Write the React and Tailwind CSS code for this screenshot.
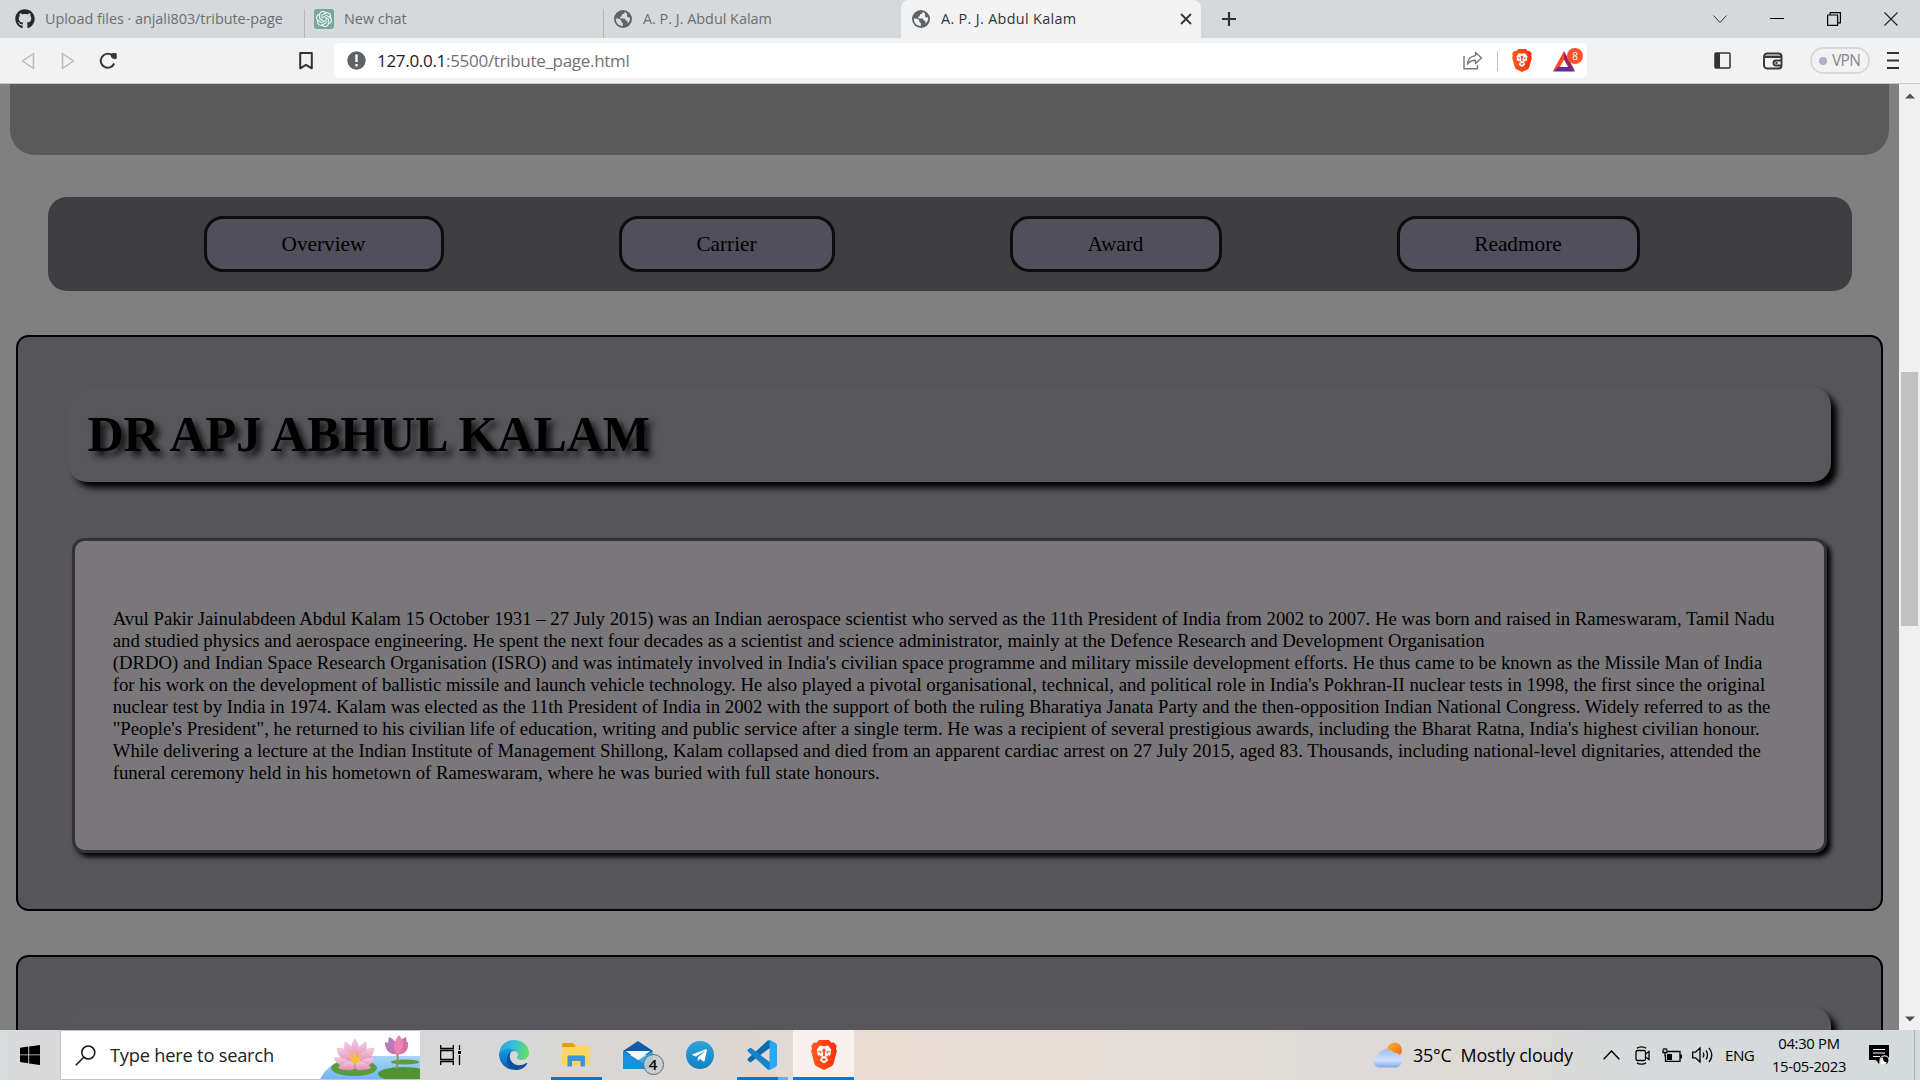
import React from "react";
import { FaGithub, FaTelegramPlane } from "react-icons/fa";
import { SiOpenai } from "react-icons/si";

const UI = "font-['Open_Sans','Noto_Sans',sans-serif]";

function Globe({ land = "#d5d9dc" }) {
  return (
    <svg width="20" height="20" viewBox="0 0 20 20" className="shrink-0">
      <circle cx="10" cy="10" r="9" fill="#5f6368" />
      <path d="M11.500 2.800c.3 1.500-.4 2.200-1.600 2.300-1 .2-1.200 1-1.100 1.900-.5.6-1.600.6-1.800 1.400 0 .7.500 1 1.300 1h3c.9.200 1 1 1.100 1.800.8.300 1.700.3 2.100 1.300.3.900 0 1.700-.7 2.500 2.600-1.600 3.600-4.200 3.200-6.800-1.400.7-2.500.3-2.900-.8-.4-1.200.3-2.200-.2-3-.5-.7-1.500-1.200-2.400-1.600z" fill={land} />
      <path d="M2.800 9.600c1.900 0 4.200.4 5.200 1.600.6 1 0 2.100 1.300 2.500.9.400.8 1.800.2 3.500C5.700 16.900 2.700 13.700 2.800 9.600z" fill={land} />
    </svg>
  );
}

function BraveLion({ width, height }) {
  return (
    <svg width={width} height={height} viewBox="0 0 26 30" className="shrink-0">
      <defs>
        <linearGradient id="lion" x1="0" y1="0" x2="1" y2="0"><stop offset="0" stopColor="#ff5a1c" /><stop offset="1" stopColor="#ff2f0c" /></linearGradient>
      </defs>
      <path d="M8 0h10l2.500 2.700 2.700-.2L25.800 6l-.9 2.700 1 2.300-3.300 12.500c-.4 1.300-1 2-2 2.800L13 30l-7.600-3.700c-1-.8-1.600-1.500-2-2.800L.1 11l1-2.300L.2 6l2.600-3.500 2.700.2z" fill="url(#lion)" />
      <path d="M9 5.500l4 .8 4-.8 3.300 4.300-.8 2.400 .4 2-3.700 3.600 .8 2.600L13 23.500l-4-3.100.8-2.600-3.700-3.600.4-2-.8-2.400z" fill="#fff" />
      <path d="M13 8l1.900 2.500-1.200 2.200.3 3.300h-2l.3-3.300-1.200-2.200zM6.500 10.800l4.500 1-.9 1.700zM19.500 10.800l-4.500 1 .9 1.700zM7.500 14.500l4 2.600-2 .9zM18.500 14.500l-4 2.600 2 .9zM13 18.200l2.500 1.200L13 21l-2.500-1.600z" fill="#ff4a1a" />
    </svg>
  );
}

function Tabs() {
  return (
    <div className={`${UI} flex h-[38px] bg-[#d5d9dc] text-[14.400px] text-[#6b6e72]`}>
      <div className="flex w-[304px] items-center pl-[15px]">
        <FaGithub size={20} color="#24292e" />
        <span className="ml-[10px] whitespace-nowrap tracking-[-0.03px]">Upload files · anjali803/tribute-page</span>
      </div>
      <div className="mt-[9px] w-px bg-[#b4b8bb]" />
      <div className="flex w-[298px] items-center pl-[9px]">
        <div className="flex size-5 items-center justify-center rounded-[3px] bg-[#75a99b]">
          <SiOpenai size={16} color="#fff" />
        </div>
        <span className="ml-[10px]">New chat</span>
      </div>
      <div className="mt-[9px] w-px bg-[#b4b8bb]" />
      <div className="flex w-[297px] items-center pl-[9px]">
        <Globe />
        <span className="ml-[10px]">A. P. J. Abdul Kalam</span>
      </div>
      <div className="flex w-[300px] items-center rounded-t-[8px] bg-[#f2f2f2] pl-[10px] pr-[9px] text-[#303236]">
        <Globe land="#f2f2f2" />
        <span className="ml-[10px] font-medium tracking-[0.330px]">A. P. J. Abdul Kalam</span>
        <svg className="ml-auto" width="12" height="12" viewBox="0 0 12 12" stroke="#303236" strokeWidth="1.800"><path d="M1 1l10 10M11 1L1 11" /></svg>
      </div>
      <svg className="ml-5 self-center" width="16" height="16" viewBox="0 0 16 16" stroke="#303236" strokeWidth="2.200"><path d="M8 1v14M1 8h14" /></svg>
      <div className="ml-auto flex items-center gap-[43px] pr-[22px]">
        <svg width="14" height="10" viewBox="0 0 14 10" fill="none" stroke="#333"><path d="M.5 1.500L7 8.500l6.500-7" /></svg>
        <svg width="14" height="14" viewBox="0 0 14 14"><path d="M0 6h14v1H0z" /></svg>
        <svg width="14" height="14" viewBox="0 0 14 14" fill="none" stroke="#000" strokeWidth="1.200"><path d="M.6 3h10v10.400H.6zM3.200 3V.6h10.200v10.200h-2.800" /></svg>
        <svg width="14" height="14" viewBox="0 0 14 14" stroke="#222" strokeWidth="1.100"><path d="M.5.5l13 13M13.500.5l-13 13" /></svg>
      </div>
    </div>
  );
}

function Toolbar() {
  return (
    <div className={`${UI} flex h-[46px] items-center border-b border-[#c9c9c9] bg-[#f2f2f2]`}>
      <svg className="ml-[21px]" width="14" height="18" viewBox="0 0 14 18" fill="none" stroke="#b7b9bb" strokeWidth="1.500" strokeLinejoin="round"><path d="M12.500 1.500v15L1.500 9z" /></svg>
      <svg className="ml-[26px]" width="14" height="18" viewBox="0 0 14 18" fill="none" stroke="#b7b9bb" strokeWidth="1.500" strokeLinejoin="round"><path d="M1.500 1.500v15L12.500 9z" /></svg>
      <svg className="ml-[24px]" width="19" height="18" viewBox="0 0 19 18" fill="none" stroke="#34373b" strokeWidth="2"><path d="M15.200 11.500A7 7 0 1 1 13 3.200" /><path d="M12.500 1.800l4.700-.2v4.900c-2.200.4-4-.2-4.700-1.600z" fill="#34373b" strokeWidth="1" strokeLinejoin="round" /></svg>
      <svg className="ml-[181px]" width="14" height="18" viewBox="0 0 14 18" fill="none" stroke="#303236" strokeWidth="2" strokeLinejoin="round"><path d="M1.200 1h11.600v15.300L7 12.800l-5.800 3.500z" /></svg>
      <div className="ml-[21px] flex h-[35px] w-[1253px] items-center rounded-[6px] bg-white pl-[13px] text-[17px]">
        <svg width="19" height="19" viewBox="0 0 19 19"><circle cx="9.500" cy="9.500" r="9.200" fill="#5f6368" /><path d="M8.300 3.500h2.400v7.500H8.300zM8.300 13h2.400v2.400H8.300z" fill="#fff" /></svg>
        <span className="ml-[11px] tracking-[-0.300px] text-[#6f7276]"><span className="text-[#222]">127.0.0.1</span>:5500/tribute_page.html</span>
        <svg className="ml-auto" width="20" height="19" viewBox="0 0 20 19" fill="none" stroke="#777" strokeWidth="1.400"><path d="M1 5v12.800h13.500V14" /><path d="M12.500 1.500L18.500 7l-6 5.500V9.200c-3.500 0-6 1-8 4 .3-4.500 3-8 8-8.600z" strokeLinejoin="round" /></svg>
        <span className="ml-[14px] mr-[14px] h-5 w-px bg-[#c5c5c5]" />
        <BraveLion width={20} height={23} />
        <div className="relative ml-[21px] mr-[12px] h-[26px] w-[22px]">
          <svg className="mt-[3px]" width="22" height="21" viewBox="0 0 22 21"><path d="M11 0L0 20l6-2.500 5-9z" fill="#ff4724" /><path d="M11 0l11 20-6-2.500-5-9z" fill="#9e1f63" /><path d="M0 20.500h22l-5.500-4.500H5.500z" fill="#662d91" /></svg>
          <span className="absolute left-[14px] top-0 flex size-4 items-center justify-center rounded-full bg-[#fb542b] text-[10px] leading-none text-white">8</span>
        </div>
      </div>
      <svg className="ml-[127px]" width="17" height="17" viewBox="0 0 17 17"><rect x="1" y="1" width="15" height="15" rx="1" fill="none" stroke="#303236" strokeWidth="1.500" /><path d="M1 1h5v15H1z" fill="#303236" /></svg>
      <svg className="ml-[32px]" width="20" height="18" viewBox="0 0 20 18" fill="none" stroke="#34373b" strokeWidth="1.900"><rect x="1" y="1.500" width="17.500" height="15" rx="3" /><path d="M2 4.800h16.500" strokeWidth="2.400" /><path d="M19 8.500h-6a2.500 2.500 0 0 0 0 5h6" /><path d="M12.500 11h2" /></svg>
      <div className="ml-[27px] flex h-[27px] w-[60px] items-center rounded-full border-2 border-[#d6d8da] pl-[7px] text-[15.500px] tracking-[-0.700px] text-[#85888c]">
        <span className="mr-[5px] size-2 rounded-full bg-[#aeb0c8]" />VPN
      </div>
      <svg className="ml-[17px]" width="12" height="17" viewBox="0 0 12 17" stroke="#303236" strokeWidth="1.800"><path d="M0 1h12M0 8.500h12M0 16h12" /></svg>
    </div>
  );
}

function NavButton({ className, children }) {
  return (
    <div className={`flex h-[56px] items-center justify-center rounded-[19px] border-[3px] border-[#0d0d0d] bg-[#504f5b] pr-px pt-[2px] text-[21.250px] text-black ${className}`}>{children}</div>
  );
}

const LINES = [
  "Avul Pakir Jainulabdeen Abdul Kalam 15 October 1931 – 27 July 2015) was an Indian aerospace scientist who served as the 11th President of India from 2002 to 2007. He was born and raised in Rameswaram, Tamil Nadu",
  "and studied physics and aerospace engineering. He spent the next four decades as a scientist and science administrator, mainly at the Defence Research and Development Organisation",
  "(DRDO) and Indian Space Research Organisation (ISRO) and was intimately involved in India's civilian space programme and military missile development efforts. He thus came to be known as the Missile Man of India",
  "for his work on the development of ballistic missile and launch vehicle technology. He also played a pivotal organisational, technical, and political role in India's Pokhran-II nuclear tests in 1998, the first since the original",
  "nuclear test by India in 1974. Kalam was elected as the 11th President of India in 2002 with the support of both the ruling Bharatiya Janata Party and the then-opposition Indian National Congress. Widely referred to as the",
  "\"People's President\", he returned to his civilian life of education, writing and public service after a single term. He was a recipient of several prestigious awards, including the Bharat Ratna, India's highest civilian honour.",
  "While delivering a lecture at the Indian Institute of Management Shillong, Kalam collapsed and died from an apparent cardiac arrest on 27 July 2015, aged 83. Thousands, including national-level dignitaries, attended the",
  "funeral ceremony held in his hometown of Rameswaram, where he was buried with full state honours.",
];

function Page() {
  return (
    <div className="flex h-[946px] overflow-hidden">
      <div className="h-full w-[1899px] overflow-hidden bg-[#808080] font-['Liberation_Serif',serif] text-black">
        <div className="mx-[10px] h-[71px] rounded-b-[25px] bg-[#5a5a5a]" />
        <div className="ml-[48px] mt-[42px] flex h-[94px] w-[1804px] items-center rounded-[19px] bg-[#3f3e40] pl-[156px]">
          <NavButton className="w-[240px]">Overview</NavButton>
          <NavButton className="ml-[175px] w-[216px]">Carrier</NavButton>
          <NavButton className="ml-[175px] w-[212px]">Award</NavButton>
          <NavButton className="ml-[175px] w-[243px]">Readmore</NavButton>
        </div>
        <section className="ml-[16px] mt-[44px] h-[576px] w-[1867px] rounded-[12.500px] border-2 border-black bg-[#565559] pl-[50px] pt-[50px]">
          <h1 className="flex h-[95px] w-[1763px] items-center rounded-[19px] bg-[#57565a] pl-[19.500px] text-[50px] font-bold [box-shadow:6px_6px_6px_#000] [text-shadow:5px_5px_6px_rgba(0,0,0,0.8)]">DR APJ ABHUL KALAM</h1>
          <div className="ml-[4px] mt-[56px] h-[315px] w-[1755px] rounded-[12.500px] border-[3px] border-[#343235] bg-[#7a777a] pl-[37.700px] pt-[67px] text-[18.750px] leading-[22px] [box-shadow:4px_4px_5px_#000]">
            {LINES.map((l) => <p key={l} className="whitespace-nowrap">{l}</p>)}
          </div>
        </section>
        <section className="ml-[16px] mt-[44px] h-[576px] w-[1867px] rounded-[12.500px] border-2 border-black bg-[#565559] pl-[50px] pt-[50px]">
          <div className="h-[95px] w-[1763px] rounded-[19px] bg-[#57565a] [box-shadow:6px_6px_6px_#000]" />
        </section>
      </div>
      <div className="flex w-[21px] flex-col items-center bg-[#f0f0f0]">
        <svg className="mt-[9px]" width="10" height="6" viewBox="0 0 10 6"><path d="M0 5.500h10L5 .5z" fill="#505050" /></svg>
        <div className="mt-[273px] h-[254px] w-[17px] bg-[#c1c1c1]" />
        <svg className="mb-[8px] mt-auto" width="10" height="6" viewBox="0 0 10 6"><path d="M0 .5h10L5 5.500z" fill="#505050" /></svg>
      </div>
    </div>
  );
}

function Lotus() {
  return (
    <svg width="100" height="50" viewBox="0 0 100 50">
      <defs>
        <linearGradient id="water" x1="0" y1="0" x2="0" y2="1"><stop offset="0" stopColor="#a9d3fb" /><stop offset="1" stopColor="#6cb6f7" /></linearGradient>
        <linearGradient id="petal" x1="0" y1="0" x2="0" y2="1"><stop offset="0" stopColor="#f0cfe4" /><stop offset="1" stopColor="#e887b4" /></linearGradient>
        <linearGradient id="bud" x1="0" y1="0" x2="1" y2="1"><stop offset="0" stopColor="#a37fc0" /><stop offset="1" stopColor="#e96a9e" /></linearGradient>
      </defs>
      <path d="M0 50C5 36 22 26 50 26h50v24z" fill="url(#water)" />
      <ellipse cx="34" cy="38" rx="23" ry="8" fill="#5b9c36" />
      <ellipse cx="83" cy="44" rx="25" ry="7" fill="#4f9431" />
      <ellipse cx="85" cy="32" rx="14" ry="2.500" fill="#5b9c36" />
      <path d="M77 39c0-6 2-10 0-16" stroke="#7d9a5c" strokeWidth="2" fill="none" />
      <g fill="url(#petal)" stroke="#dc8fbb" strokeWidth=".3">
        <path d="M35 9c5 6 5 14 0 21-5-7-5-15 0-21z" />
        <path d="M25 12c7 3 11 10 11 18-9-2-13-9-11-18zM46 12c-7 3-11 10-11 18 9-2 13-9 11-18z" />
        <path d="M17 18c10 0 16 6 18 15-10 1-17-5-18-15zM54 18c-10 0-16 6-18 15 10 1 17-5 18-15z" />
        <path d="M14 28c8-1 16 1 21 8-8 3-17 1-21-8zM55 28c-8-1-15 1-20 8 8 3 16 1 20-8z" />
        <path d="M18 38c4-6 10-8 17-6-1 7-9 10-17 6zM51 38c-4-6-10-8-17-6 1 7 9 10 17 6zM27 40c1-5 4-8 8-8 3 5-1 9-8 8zM43 40c-1-5-4-8-8-8-3 5 1 9 8 8z" />
      </g>
      <path d="M29 22l4 6 1-8 3 8 4-6-1 9c-3 3-7 3-9 0z" fill="#f7c331" />
      <g fill="url(#bud)"><path d="M65 12c7 1 11 5 12 12-8 1-12-4-12-12zM88 12c-7 1-10 5-11 12 8 1 12-4 11-12z" /><path d="M69 7c7 3 10 9 8 18-8-4-10-10-8-18zM86 7c-7 3-10 9-8 18 8-4 10-10 8-18z" /><path d="M79 5c6 7 5 14-1 20-6-6-5-13 1-20z" fill="#ec83b5" /></g>
    </svg>
  );
}

function Edge() {
  return (
    <svg width="30" height="30" viewBox="0 0 30 30">
      <defs>
        <linearGradient id="e1" x1="0" y1=".3" x2="1" y2=".4"><stop offset="0" stopColor="#2aa5dc" /><stop offset=".5" stopColor="#35c1d8" /><stop offset="1" stopColor="#66e05d" /></linearGradient>
        <linearGradient id="e2" x1="0" y1="0" x2="0" y2="1"><stop offset="0" stopColor="#1b9de2" /><stop offset="1" stopColor="#0a5bb0" /></linearGradient>
      </defs>
      <path d="M0 14C1 5 7 0 15 0c9 0 15 6 15 13 0 4-3 7-7 7-3 0-5-1-5-2.500 0-1 1-1.500 1-3 0-3-3-5.500-7-5.500C6 9 1 12 0 14z" fill="url(#e1)" />
      <path d="M0 14c2-4 6-5.500 10-5.500 5 0 9 3 9 6 0-2-2-3.500-4-3.500-3 0-6 4-6 8 0 5 4 10 9 10.500C8 31 0 24 0 14z" fill="url(#e2)" />
      <path d="M12 12c-3 5 0 12 6 13 4 .7 7-.5 9.500-2 .6-.3 1 .1.700.7C26 27.500 22 30 17 30c-6-1-9-6-9-11 0-3 1.500-5.500 4-7z" fill="#0d4f9c" />
    </svg>
  );
}

function Explorer() {
  return (
    <svg width="28" height="24" viewBox="0 0 28 24">
      <path d="M0 1.500C0 .7.500 0 1.500 0h9.500l2.500 2.500V6H0z" fill="#e0a011" />
      <path d="M0 4h12l2-1.500h12.500c.8 0 1.200.5 1.200 1.200V21c0 1-.5 1.500-1.500 1.500H1.500C.5 22.500 0 22 0 21z" fill="#ffd460" />
      <path d="M5.500 23.500V14c0-1 .6-1.600 1.600-1.600h14.300c1 0 1.600.6 1.600 1.600v9.500h-4.500V18h-8.500v5.500z" fill="#3f95d8" />
    </svg>
  );
}

function Mail() {
  return (
    <div className="relative h-[34px] w-[41px]">
      <svg width="31" height="29" viewBox="0 0 31 29">
        <path d="M0 10L15 0l15 10-4 4H4z" fill="#0f5cab" />
        <path d="M2.500 10h25l-12.500 9z" fill="#f4f4f4" />
        <path d="M0 10l15 9.500L30 10v18H0z" fill="#2cb0ec" />
        <path d="M0 10v18h30z" fill="#1a8fdc" />
      </svg>
      <span className="absolute left-[20px] top-[13px] flex size-[21px] items-center justify-center rounded-full border border-[#666] bg-[#c8ced2]/85 text-[15px] font-semibold leading-none">4</span>
    </div>
  );
}

function VSCode() {
  return (
    <svg width="30" height="30" viewBox="0 0 100 100">
      <path d="M96 12L76 1c-3-1-5 0-7 1L3 62c-2 2-2 4 0 6l6 5c2 1 4 1 5 0L94 13z" fill="#0b6cb0" />
      <path d="M96 88L76 99c-3 1-5 0-7-1L3 38c-2-2-2-4 0-6l6-5c2-1 4-1 5 0l80 60z" fill="#1384cc" />
      <path d="M76 99c-3 1-5 0-7-1 2 2 6 1 6-3V5c0-4-4-5-6-3 2-2 4-2 7-1l20 10c2 1 4 3 4 6v66c0 3-2 5-4 6z" fill="#2aa8f2" />
    </svg>
  );
}

function Taskbar() {
  return (
    <div className={`${UI} flex h-[50px] bg-[linear-gradient(90deg,#d9dadb_0%,#d8d7d6_30%,#dcd7d3_38%,#eaddd4_45%,#e8dfd8_55%,#dddad7_70%,#dedad6_76%,#d6dadb_86%,#d5dadc_100%)] text-black`}>
      <div className="flex w-[60px] items-center pl-5">
        <svg width="20" height="20" viewBox="0 0 20 20"><path d="M0 2.800L8.300 1.600v7.800H0zM9.200 1.500L20 0v9.400H9.200zM0 10.300h8.300v7.900L0 17zM9.200 10.300H20V20L9.200 18.400z" /></svg>
      </div>
      <div className="flex h-[50px] w-[360px] items-center overflow-hidden border border-r-0 border-[#c4c4c4] bg-white pl-[14px]">
        <svg width="21" height="21" viewBox="0 0 21 21" fill="none" stroke="#111" strokeWidth="1.500"><circle cx="13.300" cy="7.500" r="6.500" /><path d="M8.700 12.200L.8 20.300" /></svg>
        <span className="ml-[14px] whitespace-nowrap text-[18.300px] tracking-[-0.230px] text-[#222]">Type here to search</span>
        <div className="ml-auto shrink-0"><Lotus /></div>
      </div>
      <div className="flex w-[62px] items-center justify-center pr-[2px]">
        <svg width="21" height="20" viewBox="0 0 21 20" fill="none" stroke="#000" strokeWidth="1.300"><path d="M.7 0v3.500h12.600V0M.7 20v-3.500h12.600V20M.7 5.500h12.600v9H.7zM19.500 0v5M19.500 10v10" /><path d="M18 6h3v3h-3z" fill="#000" stroke="none" /></svg>
      </div>
      <div className="flex w-[62px] items-center justify-center pl-[2px]"><Edge /></div>
      <div className="ml-px flex w-[62px] items-center justify-center"><div className="flex h-full w-[51px] items-center justify-center border-b-[3px] border-[#0078d7] pt-[3px]"><Explorer /></div></div>
      <div className="flex w-[62px] items-center justify-center pl-[10px] pt-[5px]"><Mail /></div>
      <div className="flex w-[62px] items-center justify-center">
        <div className="flex size-[28px] items-center justify-center rounded-full bg-gradient-to-b from-[#2ca5dc] to-[#1681c0] pr-[2px]"><FaTelegramPlane size={17} color="#fff" /></div>
      </div>
      <div className="flex w-[62px] items-center justify-center">
        <div className="flex h-full w-[51px] flex-col">
          <div className="flex flex-1 items-center justify-center pt-[2px]"><VSCode /></div>
          <div className="flex h-[3px]"><div className="w-[41px] bg-[#0078d7]" /><div className="w-[10px] bg-[#66aee8]" /></div>
        </div>
      </div>
      <div className="flex w-[61px] items-center justify-center border-b-[3px] border-[#0078d7] bg-[#f6f1ee] pt-[2px]"><BraveLion width={26} height={30} /></div>
      <div className="ml-auto flex items-center">
        <svg width="32" height="28" viewBox="0 0 32 28">
          <defs>
            <linearGradient id="sun" x1="0" y1="0" x2="1" y2="1"><stop offset="0" stopColor="#fdb52d" /><stop offset="1" stopColor="#ef6410" /></linearGradient>
            <linearGradient id="cloud" x1="0" y1="0" x2="0" y2="1"><stop offset="0" stopColor="#9dbff8" /><stop offset=".6" stopColor="#cfe0fa" /><stop offset="1" stopColor="#7fa9ee" /></linearGradient>
          </defs>
          <circle cx="22.500" cy="9" r="7.500" fill="url(#sun)" />
          <path d="M7 26.500a6.300 6.300 0 0 1-1-12.200A8.700 8.700 0 0 1 21.500 11.800a7.600 7.600 0 0 1 3.500 14.700z" fill="url(#cloud)" />
        </svg>
        <span className="ml-[9px] w-[162px] whitespace-pre text-[17.900px] tracking-[-0.180px]">35°C  Mostly cloudy</span>
        <svg className="ml-[28px]" width="17" height="10" viewBox="0 0 17 10" fill="none" stroke="#000" strokeWidth="1.400"><path d="M.7 9.300L8.500 1l7.800 8.300" /></svg>
        <svg className="ml-[15px]" width="16" height="19" viewBox="0 0 16 19" fill="none" stroke="#000" strokeWidth="1.300"><rect x="1" y="4.500" width="9.500" height="10" rx="1.500" /><path d="M10.500 8l3.500-2.500v8L10.500 11M2 2.300c2-2 7-2 9 0M2 16.700c2 2 7 2 9 0" /></svg>
        <svg className="ml-[11px]" width="20" height="15" viewBox="0 0 20 15" fill="none" stroke="#000" strokeWidth="1.300"><path d="M6 3.500h12v9.800H3.500V7M19.300 6.500v4M1 1.500v3h4v-3M2 0v2M4 0v2M3 4.500v4" /><path d="M5 6h5v6H5z" fill="#000" stroke="none" /></svg>
        <svg className="ml-[10px]" width="21" height="18" viewBox="0 0 21 18" fill="none" stroke="#000" strokeWidth="1.300"><path d="M.7 6.200h2.800L8 2v14l-4.500-4.200H.7zM11 6.500c1 1.500 1 3.500 0 5M14 4.500c2 2.500 2 6.500 0 9M17 1.800c3.500 4.500 3.500 10 0 14.400" /></svg>
        <span className="ml-[12px] w-[30px] text-[15.200px] tracking-[-0.500px]">ENG</span>
        <div className="ml-[14px] w-[80px] whitespace-nowrap text-center text-[14.800px] leading-[23px] tracking-[-0.300px]">04:30 PM<br />15-05-2023</div>
        <svg className="ml-[20px]" width="22" height="21" viewBox="0 0 22 21"><path d="M0 0h20v15h-9l-1 4-3-4H0z" /><path d="M4 4.500h12M4 8h12M4 11.500h7" stroke="#fff" strokeWidth="1.200" /><circle cx="15.500" cy="15.300" r="4.500" stroke="#d5dadc" strokeWidth="1.200" /><path d="M14 12.500a3.500 3.500 0 1 0 4 4.500 3.500 3.500 0 0 1-4-4.500z" fill="#fff" /></svg>
        <div className="ml-[23px] mr-[5px] h-[50px] w-px bg-[#a9adaf]" />
      </div>
    </div>
  );
}

export default function App() {
  return (
    <div className="h-[1080px] w-[1920px] overflow-hidden">
      <Tabs />
      <Toolbar />
      <Page />
      <Taskbar />
    </div>
  );
}
